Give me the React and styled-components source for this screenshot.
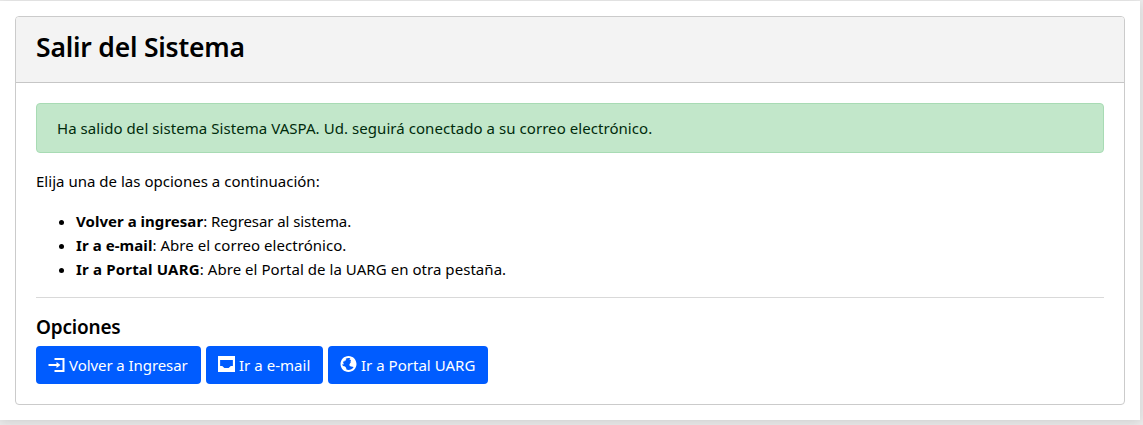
import React from 'react';
import styled, { createGlobalStyle } from 'styled-components';

const GlobalStyle = createGlobalStyle`
  *, *::before, *::after { box-sizing: border-box; }
  html, body { margin: 0; height: 100%; overflow: hidden; }
  body {
    background: #ebebeb;
    color: #000;
    font-family: "Noto Sans", "Open Sans", sans-serif;
    font-size: 15px;
    line-height: 24px;
  }
`;

const Page = styled.main`
  width: 1140px;
  margin-top: 1px;
  padding: 15px;
  background: #fff;
  box-shadow: 0 2px 10px rgba(0, 0, 0, 0.12);
`;

const Card = styled.section`
  border: 1px solid #cbcbcb;
  border-radius: 4px;
  overflow: hidden;
`;

const CardHeader = styled.header`
  height: 66px;
  padding: 13px 20px 0;
  background: #f3f3f3;
  border-bottom: 1px solid #c6c6c6;
`;

const Title = styled.h3`
  margin: 0;
  font-size: 26.5px;
  font-weight: 600;
  line-height: 34px;
  letter-spacing: ${(p) => p.$track}px;
`;

const CardBody = styled.div`
  padding: 20px;
`;

const Alert = styled.div`
  height: 50px;
  margin-bottom: 16px;
  padding: 12px 20px;
  color: #002b0c;
  background: #c2e7ca;
  border: 1px solid #a8dbb4;
  border-radius: 4px;
`;

const Text = styled.span`
  letter-spacing: ${(p) => p.$track || 0}px;
  white-space: nowrap;
`;

const Paragraph = styled.p`
  margin: 0 0 16px;
`;

const List = styled.ul`
  margin: 0 0 16px;
  padding-left: 40px;
`;

const Strong = styled.strong`
  font-weight: 700;
  letter-spacing: ${(p) => p.$track || 0}px;
`;

const Divider = styled.hr`
  margin: 0 0 16px;
  border: 0;
  border-top: 1px solid #d9d9d9;
`;

const Subtitle = styled.h5`
  margin: 0 0 7px;
  padding-top: 1px;
  font-size: 19px;
  font-weight: 600;
  line-height: 24px;
  letter-spacing: ${(p) => p.$track}px;
`;

const Actions = styled.div`
  display: flex;
  gap: 5px;
`;

const Button = styled.button`
  display: flex;
  align-items: center;
  gap: 4px;
  width: ${(p) => p.$width}px;
  height: 38px;
  padding: 0 12px;
  border: 0;
  border-radius: 4px;
  background: #005cff;
  color: #fff;
  font: inherit;
`;

const Icon = styled.svg`
  flex: none;
  width: 17px;
  height: 16px;
  margin-top: ${(p) => p.$shift || 0}px;
  fill: currentColor;
`;

const EnterIcon = () => (
  <Icon viewBox="-0.25 -0.5 8.5 8">
    <path d="M3 0v1h4v5h-4v1h5v-7h-5zm1 2v1h-4v1h4v1l2-1.5-2-1.5z" />
  </Icon>
);

const InboxIcon = () => (
  <Icon viewBox="0 0 8 8" preserveAspectRatio="none" $shift={-2}>
    <path d="M.19 0c-.11 0-.19.08-.19.19v7.63c0 .11.08.19.19.19h7.63c.11 0 .19-.08.19-.19v-7.63c0-.11-.08-.19-.19-.19h-7.63zm.81 2h6v3h-1l-1 1h-2l-1-1h-1v-3z" />
  </Icon>
);

const GlobeIcon = () => (
  <Icon viewBox="-0.25 0 8.5 8" $shift={-2}>
    <path d="M4 0c-2.2 0-4 1.8-4 4s1.8 4 4 4 4-1.8 4-4-1.8-4-4-4zm0 1c.33 0 .64.09.94.19-.21.2-.45.38-.41.56.04.18.69.13.69.5 0 .27-.42.35-.13.66.35.35-.64.98-.66 1.44-.03.83.84.97 1.53.97.42 0 .53.2.5.44-.54.77-1.46 1.25-2.47 1.25-.38 0-.73-.09-1.06-.22.22-.44-.28-1.31-.75-1.59-.23-.23-.72-.14-1-.25-.09-.27-.18-.54-.19-.84.03-.05.08-.09.16-.09.19 0 .45.38.59.34.18-.04-.74-1.31-.31-1.56.2-.12.6.39.47-.16-.12-.51.36-.28.66-.41.26-.11.45-.41.13-.59-.06-.03-.13-.1-.22-.19.45-.27.97-.44 1.53-.44z" />
  </Icon>
);

const options = [
  { name: 'Volver a ingresar', text: ': Regresar al sistema.', nameTrack: 0.03, track: -0.08 },
  { name: 'Ir a e-mail', text: ': Abre el correo electrónico.', nameTrack: 0.07, track: 0.04 },
  { name: 'Ir a Portal UARG', text: ': Abre el Portal de la UARG en otra pestaña.', nameTrack: 0.18, track: 0.05 },
];

const actions = [
  { label: 'Volver a Ingresar', width: 165, track: -0.07, Glyph: EnterIcon },
  { label: 'Ir a e-mail', width: 117, track: 0.03, Glyph: InboxIcon },
  { label: 'Ir a Portal UARG', width: 160, track: 0.02, Glyph: GlobeIcon },
];

export default function App() {
  return (
    <>
      <GlobalStyle />
      <Page>
        <Card>
          <CardHeader>
            <Title $track={-0.2}>Salir del Sistema</Title>
          </CardHeader>
          <CardBody>
            <Alert>
              <Text $track={0.06}>
                Ha salido del sistema Sistema VASPA. Ud. seguirá conectado a su correo electrónico.
              </Text>
            </Alert>
            <Paragraph>
              <Text $track={0.02}>Elija una de las opciones a continuación:</Text>
            </Paragraph>
            <List>
              {options.map((o) => (
                <li key={o.name}>
                  <Strong $track={o.nameTrack}>{o.name}</Strong>
                  <Text $track={o.track}>{o.text}</Text>
                </li>
              ))}
            </List>
            <Divider />
            <Subtitle $track={-0.2}>Opciones</Subtitle>
            <Actions>
              {actions.map(({ label, width, track, Glyph }) => (
                <Button key={label} $width={width}>
                  <Glyph />
                  <Text $track={track}>{label}</Text>
                </Button>
              ))}
            </Actions>
          </CardBody>
        </Card>
      </Page>
    </>
  );
}
